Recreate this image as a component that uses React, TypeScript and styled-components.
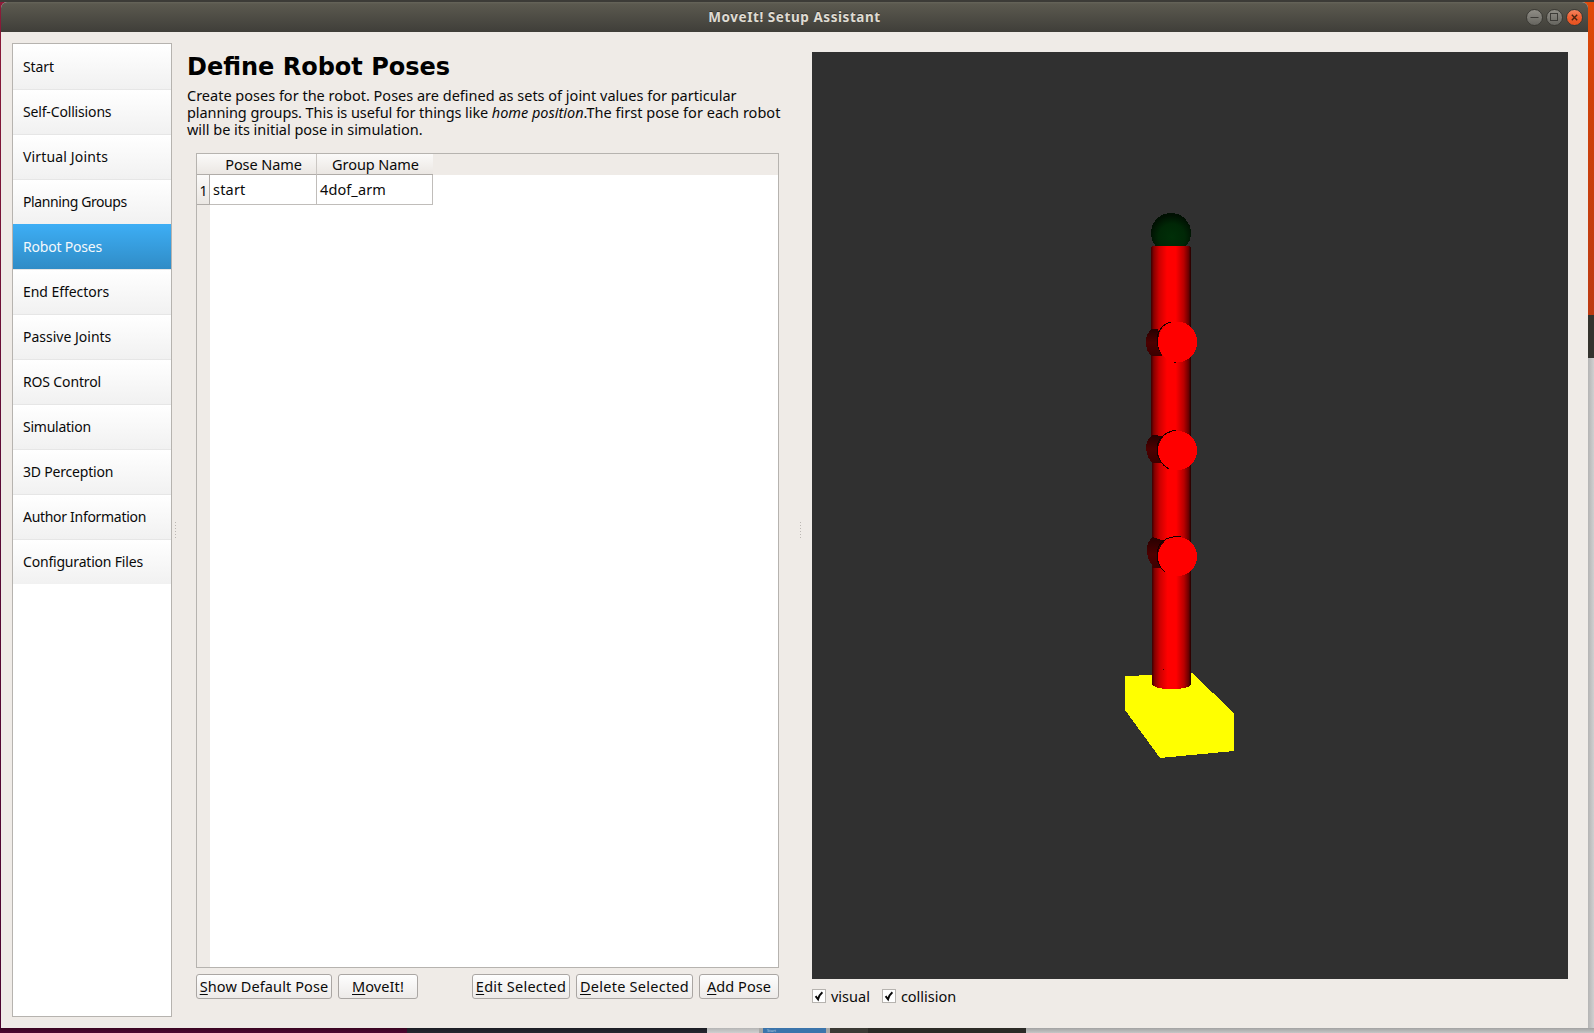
import React from "react";
import styled, { createGlobalStyle } from "styled-components";

const Global = createGlobalStyle`
  * { box-sizing: border-box; }
  body { margin: 0; overflow: hidden; background: #3c3b37; }
`;

const UI = `"Noto Sans", "Open Sans", sans-serif`;

/* Desktop behind the window */
const Desktop = styled.div`
  width: 1594px;
  height: 1033px;
  display: grid;
  grid-template-rows: 2px 1026px 5px;
  font-family: ${UI};
  color: #0a0a0a;
`;
const TopEdge = styled.div`
  background: #3c3b37;
`;
const Middle = styled.div`
  display: grid;
  grid-template-columns: 1587px 7px;
  background: linear-gradient(90deg, #8e1a38 0 50%, #e24a0a 50%);
`;
const WindowSlot = styled.div`
  display: flex;
  padding-left: 1px;
  margin-right: -1px;
  background: linear-gradient(180deg, #8b1b38 0, #7a1436 200px, #5c0a35 480px, #4d0530 100%) left / 1px 100% no-repeat;
`;
const RightEdge = styled.div`
  display: flex;
  flex-direction: column;
  padding-left: 1px;
`;
const EdgeStrip = styled.div<{ $h?: number; $bg: string }>`
  ${(p) => (p.$h ? `height: ${p.$h}px;` : "flex: 1;")}
  background: ${(p) => p.$bg};
`;
const BottomEdge = styled.div`
  display: flex;
  overflow: hidden;
`;
const Strip = styled.div<{ $w?: number; $bg: string }>`
  ${(p) => (p.$w ? `width: ${p.$w}px;` : "flex: 1;")}
  height: 5px;
  background: ${(p) => p.$bg};
  color: #b9cde0;
  font-size: 4px;
  line-height: 5px;
  padding-left: 4px;
`;

/* Window frame */
const Window = styled.div`
  flex: 1;
  display: flex;
  flex-direction: column;
  border-radius: 6px 6px 0 0;
  overflow: hidden;
  background: #efebe7;
`;
const TitleBar = styled.header`
  height: 30px;
  display: grid;
  grid-template-columns: 1fr auto 1fr;
  align-items: center;
  background: linear-gradient(180deg, #66655a 0, #5b594f 2px, #3f3e39 100%);
`;
const Title = styled.h1`
  grid-column: 2;
  margin: 0;
  font-size: 13.5px;
  line-height: 20px;
  font-weight: 700;
  letter-spacing: 0.56px;
  color: #dfdbd2;
  text-shadow: 0 -1px 0 #33322e;
`;
const Controls = styled.div`
  justify-self: end;
  display: flex;
  gap: 3px;
  padding-right: 5px;
`;
const Control = styled.button<{ $close?: boolean }>`
  width: 17px;
  height: 17px;
  padding: 0;
  display: flex;
  border: 1px solid #3a3934;
  border-radius: 50%;
  background: ${(p) =>
    p.$close ? "linear-gradient(180deg, #f5845f, #ee5e30 50%, #e8531f)" : "linear-gradient(180deg, #8f8d86, #66655f)"};
  svg { display: block; width: 15px; height: 15px; }
`;

const Body = styled.div`
  flex: 1;
  display: flex;
  padding: 11px 20px 11px 11px;
`;

/* Sidebar */
const Sidebar = styled.nav`
  width: 160px;
  border: 1px solid #b6b3af;
  background: #fff;
`;
const NavItem = styled.div<{ $active?: boolean; $ls?: number }>`
  height: 45px;
  padding: 0 0 1px 10px;
  display: flex;
  align-items: center;
  font-size: 14px;
  white-space: pre;
  letter-spacing: ${(p) => p.$ls ?? 0}px;
  color: ${(p) => (p.$active ? "#f4f8fb" : "#0a0a0a")};
  background: ${(p) =>
    p.$active ? "linear-gradient(180deg, #3daef5, #308cc6)" : "linear-gradient(180deg, #fff, #f1f1f1)"};
  border-top: ${(p) => (p.$active ? "0" : "1px solid #e6e6e6")};
  &:first-child { border-top-color: #fff; }
`;

const Splitter = styled.div<{ $w: number; $pad: number }>`
  width: ${(p) => p.$w}px;
  padding-left: ${(p) => p.$pad}px;
  display: flex;
  align-items: center;
  &::before {
    content: "";
    width: 1px;
    height: 17px;
    background: repeating-linear-gradient(180deg, #bcb8b4 0 1px, transparent 1px 3px);
  }
`;

/* Pose page */
const Page = styled.main`
  width: 611px;
  padding: 9px 0 18px 0;
  display: flex;
  flex-direction: column;
`;
const Heading = styled.h2`
  margin: 0 0 5px;
  font: 700 24px/30px "DejaVu Sans", sans-serif;
  color: #000;
  white-space: pre;
`;
const Description = styled.p`
  margin: 0 0 15px;
  font-size: 14.5px;
  line-height: 17px;
  white-space: nowrap;
`;
const Track = styled.span<{ $ls: number }>`
  letter-spacing: ${(p) => p.$ls}px;
`;
const Home = styled.em`
  letter-spacing: -0.02px;
`;
const TableFrame = styled.section`
  flex: 1;
  width: 583px;
  margin-left: 9px;
  display: flex;
  flex-direction: column;
  border: 1px solid #b6b3af;
  background: linear-gradient(90deg, #efebe7 13px, #fff 13px);
`;
const HeaderRow = styled.div`
  height: 21px;
  display: flex;
  background: #efebe7;
`;
const HeaderCell = styled.div<{ $w: number; $line?: boolean }>`
  width: ${(p) => p.$w}px;
  padding-left: 1px;
  display: flex;
  align-items: center;
  justify-content: center;
  font-size: 14.5px;
  line-height: 20px;
  letter-spacing: -0.08px;
  white-space: pre;
  background: linear-gradient(180deg, #fbfaf9, #ebe7e3);
  border-bottom: 1px solid #b0aca8;
  border-right: ${(p) => (p.$line ? "1px solid #cbc7c3" : "0")};
`;
const Row = styled.div`
  height: 30px;
  display: flex;
`;
const RowNumber = styled.div`
  width: 13px;
  display: flex;
  align-items: center;
  justify-content: center;
  padding: 2px 0 0 1px;
  font-size: 14px;
  background: linear-gradient(180deg, #fbfaf9, #ebe7e3);
  border-right: 1px solid #b0aca8;
  border-bottom: 1px solid #b0aca8;
`;
const Cell = styled.div<{ $w: number; $ls: number }>`
  width: ${(p) => p.$w}px;
  padding: 0 0 1px 3px;
  display: flex;
  align-items: center;
  font-size: 14.5px;
  letter-spacing: ${(p) => p.$ls}px;
  background: #fff;
  border-right: 1px solid #c0bdba;
  border-bottom: 1px solid #c0bdba;
`;
const Buttons = styled.div`
  display: flex;
  gap: 6px;
  width: 583px;
  margin: 6px 0 0 9px;
`;
const Spacer = styled.div`
  flex: 1;
`;
const Button = styled.button<{ $w: number; $ls: number }>`
  width: ${(p) => p.$w}px;
  height: 25px;
  padding: 0 0 1px;
  flex: none;
  border: 1px solid #aaa6a3;
  border-radius: 3px;
  background: linear-gradient(180deg, #fefefe, #edeae8);
  font: 14.5px/22px ${UI};
  letter-spacing: ${(p) => p.$ls}px;
  color: #0a0a0a;
  white-space: nowrap;
  u { text-decoration-thickness: 1px; text-underline-offset: 2px; }
`;

/* Robot preview */
const Preview = styled.aside`
  width: 756px;
  padding-top: 9px;
  display: flex;
  flex-direction: column;
`;
const Viewport = styled.div`
  height: 927px;
  background: #303030;
  svg { display: block; }
`;
const Options = styled.div`
  display: flex;
  gap: 12px;
  padding-top: 7px;
`;
const Option = styled.label`
  display: flex;
  align-items: center;
  gap: 5px;
  height: 20px;
  font-size: 14.5px;
`;
const Box = styled.span`
  width: 14px;
  height: 14px;
  border: 1px solid #b6b3af;
  background: #fff;
  svg { display: block; }
`;

const NAV: [string, number][] = [
  ["Start", -0.1],
  ["Self-Collisions", -0.16],
  ["Virtual Joints", 0.15],
  ["Planning Groups", -0.4],
  ["Robot Poses", -0.2],
  ["End Effectors", -0.05],
  ["Passive Joints", 0],
  ["ROS Control", -0.15],
  ["Simulation", -0.25],
  ["3D Perception", -0.2],
  ["Author Information", -0.3],
  ["Configuration Files", -0.19],
];

function Check({ label }: { label: string }) {
  return (
    <Option>
      <Box>
        <svg width="12" height="12" viewBox="0 0 12 12">
          <path d="M2.6 6.2 L5 9.3 Q6 5 9.4 2.2" fill="none" stroke="#0a0a0a" strokeWidth="2" />
        </svg>
      </Box>
      {label}
    </Option>
  );
}

function Robot() {
  return (
    <svg width="756" height="927" viewBox="812 52 756 927" shapeRendering="crispEdges">
      <defs>
        <linearGradient id="tube">
          <stop offset="0" stopColor="#3a0000" />
          <stop offset="0.07" stopColor="#870000" />
          <stop offset="0.2" stopColor="#cc0000" />
          <stop offset="0.4" stopColor="#ff0000" />
          <stop offset="0.62" stopColor="#ff0000" />
          <stop offset="0.82" stopColor="#b80000" />
          <stop offset="0.94" stopColor="#6a0000" />
          <stop offset="1" stopColor="#200000" />
        </linearGradient>
        <radialGradient id="ball" cx="0.52" cy="0.6" r="0.55">
          <stop offset="0" stopColor="#002f08" />
          <stop offset="0.6" stopColor="#002706" />
          <stop offset="1" stopColor="#001002" />
        </radialGradient>
        <linearGradient id="stub" x1="0" y1="0" x2="0" y2="1">
          <stop offset="0" stopColor="#260000" />
          <stop offset="0.5" stopColor="#4c0000" />
          <stop offset="1" stopColor="#3a0000" />
        </linearGradient>
      </defs>
      <polygon points="1125,676 1152,675 1192,673 1234,713 1234,751 1160,758 1125,710" fill="#ffff00" />
      <circle cx="1171" cy="233" r="20" fill="url(#ball)" />
      <path d="M1152 560 H1191 V684 Q1190 689 1171.500 689 Q1154 689 1152 684 Z" fill="url(#tube)" />
      <rect x="1152" y="455" width="39" height="88" fill="url(#tube)" />
      <rect x="1151" y="350" width="40" height="90" fill="url(#tube)" />
      <path d="M1152 246 H1190 L1191 248 V335 H1151 V248 Z" fill="url(#tube)" />
      <path d="M1158 329 H1152 Q1146 333 1146 342 Q1146 352 1152 356 H1162 Z" fill="url(#stub)" />
      <path d="M1152 435 Q1146 440 1146 448 Q1147 459 1153 463 H1163 V436 Z" fill="url(#stub)" />
      <path d="M1153 537 Q1147 541 1147 549 Q1147 560 1153 566 H1152 V568 H1160 L1164 572 V541 Z" fill="url(#stub)" />
      <path d="M1171 322 Q1157 326 1157 342 Q1160 358 1176 362.500" fill="none" stroke="#160000" />
      <path d="M1176 430 Q1157 434 1157 450 Q1158 463 1169 469" fill="none" stroke="#160000" />
      <path d="M1181 536.500 Q1157 536 1157 556 Q1158 567 1165 572" fill="none" stroke="#160000" />
      <ellipse cx="1177.500" cy="342" rx="19.700" ry="20.300" fill="#ff0000" />
      <ellipse cx="1177.500" cy="450.500" rx="19.700" ry="19.700" fill="#ff0000" />
      <ellipse cx="1177.500" cy="556.500" rx="19.700" ry="19.500" fill="#ff0000" />
      <rect x="1163" y="669" width="1" height="1" fill="#500000" />
    </svg>
  );
}

export default function App() {
  return (
    <Desktop>
      <Global />
      <TopEdge />
      <Middle>
        <WindowSlot>
          <Window>
            <TitleBar>
              <Title>MoveIt! Setup Assistant</Title>
              <Controls>
                <Control aria-label="Minimize">
                  <svg viewBox="0 0 15 15"><path d="M3.500 7.500 H11.500" stroke="#3c3b37" fill="none" /></svg>
                </Control>
                <Control aria-label="Maximize">
                  <svg viewBox="0 0 15 15"><rect x="3.500" y="3.500" width="7" height="7" stroke="#3c3b37" fill="none" /></svg>
                </Control>
                <Control $close aria-label="Close">
                  <svg viewBox="0 0 15 15"><path d="M4.800 4.800 L10.200 10.200 M10.200 4.800 L4.800 10.200" stroke="#4a2410" strokeWidth="1.400" fill="none" /></svg>
                </Control>
              </Controls>
            </TitleBar>
            <Body>
              <Sidebar>
                {NAV.map(([label, ls]) => (
                  <NavItem key={label} $ls={ls} $active={label === "Robot Poses"}>{label}</NavItem>
                ))}
              </Sidebar>
              <Splitter $w={15} $pad={3} />
              <Page>
                <Heading>Define Robot Poses</Heading>
                <Description>
                  Create poses for the robot. Poses are defined as sets of joint values for particular
                  <br />
                  <Track $ls={-0.08}>planning groups. This is useful for things like </Track>
                  <Home>home position</Home>
                  <Track $ls={0.03}>.The first pose for each robot</Track>
                  <br />
                  <Track $ls={-0.03}>will be its initial pose in simulation.</Track>
                </Description>
                <TableFrame>
                  <HeaderRow>
                    <HeaderCell $w={13} />
                    <HeaderCell $w={107} $line>Pose Name</HeaderCell>
                    <HeaderCell $w={116}>Group Name</HeaderCell>
                  </HeaderRow>
                  <Row>
                    <RowNumber>1</RowNumber>
                    <Cell $w={107} $ls={0.2}>start</Cell>
                    <Cell $w={116} $ls={0.1}>4dof_arm</Cell>
                  </Row>
                </TableFrame>
                <Buttons>
                  <Button $w={136} $ls={0.1}><u>S</u>how Default Pose</Button>
                  <Button $w={80} $ls={0.1}><u>M</u>oveIt!</Button>
                  <Spacer />
                  <Button $w={98} $ls={0.25}><u>E</u>dit Selected</Button>
                  <Button $w={117} $ls={0.25}><u>D</u>elete Selected</Button>
                  <Button $w={80} $ls={0.05}><u>A</u>dd Pose</Button>
                </Buttons>
              </Page>
              <Splitter $w={14} $pad={2} />
              <Preview>
                <Viewport><Robot /></Viewport>
                <Options>
                  <Check label="visual" />
                  <Check label="collision" />
                </Options>
              </Preview>
            </Body>
          </Window>
        </WindowSlot>
        <RightEdge>
          <EdgeStrip $h={313} $bg="linear-gradient(180deg, #e04a08, #cf4109 30%, #bd3a12)" />
          <EdgeStrip $h={43} $bg="#34332e" />
          <EdgeStrip $bg="linear-gradient(90deg, #b4b4b4, #d0d0d0)" />
        </RightEdge>
      </Middle>
      <BottomEdge>
        <Strip $w={407} $bg="linear-gradient(180deg, #3a0522, #4c0630)" />
        <Strip $w={300} $bg="linear-gradient(180deg, #1c1d24, #26272f)" />
        <Strip $w={52} $bg="linear-gradient(180deg, #b5b5b5, #cfcfcf)" />
        <Strip $w={4} $bg="#a9a8a6" />
        <Strip $w={63} $bg="#3b74ab">Start</Strip>
        <Strip $w={4} $bg="#a9a8a6" />
        <Strip $w={38} $bg="#3b3a35" />
        <Strip $w={158} $bg="#2c2b27" />
        <Strip $bg="linear-gradient(180deg, #a2a2a2, #c6c6c6)" />
      </BottomEdge>
    </Desktop>
  );
}
